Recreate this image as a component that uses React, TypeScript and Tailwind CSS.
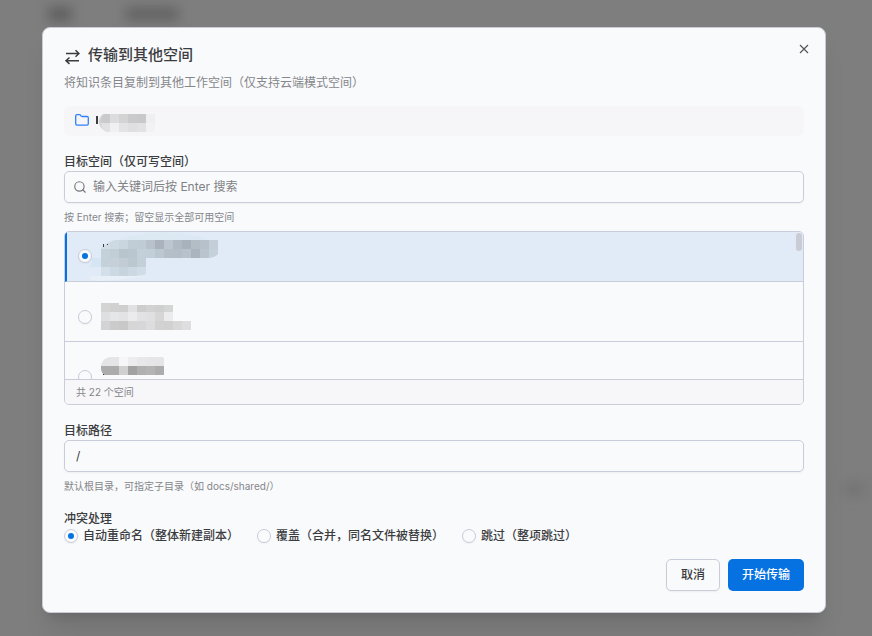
import { Search } from "lucide-react";

type MosaicData = {
  rows: (string | null)[][];
  /** outline of the visible area */
  clip?: string;
  /** soft smear painted behind the cells */
  smear?: { d: string; fill: string }[];
  /** dark remainder of the covered text */
  mark?: string;
};

const CELL = 9;

const sourceMask: MosaicData = {
  rows: [
    ["#cacaca", "#dcdcde", "#d3d3d4", "#cacacb", "#c8c8ca", "#efeff1"],
    ["#e1e1e3", "#f0f0f2", "#e3e3e5", "#dfdfe1", "#e2e2e4", "#f2f2f4"],
  ],
  clip: "M3 0H54V18H6Q0 16 0 9Q0 3 3 0Z",
  smear: [{ d: "M2 0Q-3 4-2 9Q-1 15 6 18V0Z", fill: "#d3d3d4" }],
  mark: "M-5 2h2v8h-2z",
};

const spaces: { id: string; row: string; radio: string; mask: MosaicData }[] = [
  {
    id: "space-1",
    row: "flex h-[50px] items-start gap-[9px] border-b border-l-2 border-b-[#c9ccd9] border-l-[#0671e0] bg-[#e0ebf7] pl-[11px] pt-2",
    radio: "mt-[9px]",
    mask: {
      rows: [
        ["#d2dde6", "#cddae4", "#c9d5df", "#c1cdd6", "#bfcbd5", "#b7c2cc", "#a9b2bd", "#bbc6d0", "#b0bac5", "#a8b2bc", "#b2bdc6", "#b6c1cb", "#c3ced8"],
        ["#c5d1da", "#c1ced6", "#b9c5cd", "#bac6cf", "#c4d0d9", "#c2ced8", "#bcc8d1", "#b4bfc8", "#b4bec8", "#b7c2cb", "#aab4be", "#b9c4ce", "#c4d0da"],
        ["#c4d1d9", "#c5d0d9", "#c1ccd4", "#bcc8d0", "#c4cfd8"],
        ["#d3e0ea", "#ccd9e3", "#c7d4dd", "#ccd9e2", "#d0dde6"],
      ],
      clip: "M14 0H117V14Q114 18 106 18H45V34Q40 36 30 36H0V8Q6 2 14 0Z",
      smear: [
        { d: "M14 0Q58-14 101-3L104 0Z", fill: "#dce9f3" },
        { d: "M-13 27H0V18H-9V21Q-9 26-13 27Z", fill: "#d5e5f3" },
        { d: "M-10 36H44Q20 40 0 41Q-10 41-12 38Z", fill: "#e8eff7" },
      ],
      mark: "M2 4h1v3h-1zM6 4h1v1h-1z",
    },
  },
  {
    id: "space-2",
    row: "flex h-[60px] items-start gap-[9px] border-b border-[#c9ccd9] pl-[13px] pt-[21px]",
    radio: "mt-[7px]",
    mask: {
      rows: [
        ["#d4d4d5", "#d1d1d2", "#cfcfd0", "#e1e1e3", "#cdcdce", "#d2d2d3", "#cfcfd0", "#d5d5d6"],
        ["#dedfe0", "#e5e6e8", "#e3e3e5", "#ebebed", "#e2e2e4", "#e0e0e2", "#d6d6d7", "#ebecee"],
        ["#d3d3d4", "#cbcbcc", "#c8c8c9", "#d6d6d7", "#d7d7d9", "#dddddf", "#d2d2d3", "#d1d1d2", "#d8d8d9", "#dedee0"],
      ],
      clip: "M0 0H18V2H90V27H0Z",
    },
  },
  {
    id: "space-3",
    row: "flex h-[60px] items-start gap-[9px] pl-[13px] pt-[15px]",
    radio: "mt-[13px]",
    mask: {
      rows: [
        ["#e4e4e5", "#e5e5e7", "#f6f6f8", "#ededef", "#e8e8ea", "#e6e6e8", "#e5e5e7"],
        ["#acacad", "#acacad", "#d0d0d1", "#a2a2a3", "#b0b0b1", "#b4b4b5", "#acacad"],
      ],
      clip: "M9 0H61Q63 0 63 2V18H3Q0 15 0 12V8Q2 1 9 0Z",
      mark: "M2 17h1v1h-1z",
    },
  },
];

const strategies = [
  { value: "rename", label: "自动重命名（整体新建副本）" },
  { value: "overwrite", label: "覆盖（合并，同名文件被替换）" },
  { value: "skip", label: "跳过（整项跳过）" },
];

const radioClass =
  "grid size-[14px] shrink-0 appearance-none place-content-center rounded-full border border-[#c9ccd9] bg-[#f9fafc] shadow-xs before:size-[6px] before:rounded-full checked:before:bg-[#0671e0]";

const Mosaic = ({ id, data }: { id: string; data: MosaicData }) => {
  const cols = Math.max(...data.rows.map((row) => row.length));
  return (
    <svg aria-hidden="true" width={cols * CELL} height={data.rows.length * CELL} className="shrink-0 overflow-visible">
      {data.clip && (
        <clipPath id={`clip-${id}`}>
          <path d={data.clip} />
        </clipPath>
      )}
      {data.smear?.map((s) => <path key={s.d} d={s.d} fill={s.fill} />)}
      <g clipPath={data.clip ? `url(#clip-${id})` : undefined} shapeRendering="crispEdges">
        {data.rows.map((row, y) =>
          row.map((fill, x) =>
            fill ? <rect key={`${x}-${y}`} x={x * CELL} y={y * CELL} width={CELL} height={CELL} fill={fill} /> : null,
          ),
        )}
      </g>
      {data.mark && <path d={data.mark} fill="#3b3c40" />}
    </svg>
  );
};

const TransferIcon = () => (
  <svg width="16" height="16" viewBox="0 0 16 16" fill="none" stroke="currentColor" strokeWidth="1.5" aria-hidden="true">
    <path d="M2 4.500H15M11.500 1.300 15 4.500l-3.500 3.200M15 11.700H2M5.500 8.500 2 11.700l3.500 3.200" />
  </svg>
);

const FolderIcon = () => (
  <svg width="14" height="12" viewBox="0 0 14 12" fill="none" stroke="#2f80fa" strokeWidth="1.300" aria-hidden="true">
    <path d="M.7 2A1.3 1.3 0 0 1 2 .7h2.600c.5 0 .8.2 1 .6l.5.7c.2.3.5.5.9.5h5A1.300 1.300 0 0 1 13.300 3.800v6A1.300 1.300 0 0 1 12 11.100H2A1.300 1.300 0 0 1 .7 9.800z" />
  </svg>
);

const CloseIcon = () => (
  <svg width="10" height="10" viewBox="0 0 10 10" stroke="currentColor" strokeWidth="1.2" aria-hidden="true">
    <path d="m1 1 8 8M9 1 1 9" />
  </svg>
);

const Backdrop = () => (
  <div className="absolute inset-0 overflow-hidden" aria-hidden="true">
    <div className="absolute left-12 top-[7px] h-3.5 w-6 bg-[#5f5f5f] blur-[6px]" />
    <div className="absolute left-[126px] top-[7px] h-3.5 w-[52px] bg-[#636363] blur-[6px]" />
    <div className="absolute right-2 top-[482px] h-3.5 w-5 bg-[#747474] blur-[6px]" />
  </div>
);

export default function App() {
  return (
    <div className="relative min-h-screen bg-[#7e7e7e] pb-[23px] pl-[42px] pr-[46px] pt-[27px] font-['Inter','Noto_Sans_CJK_SC',sans-serif] text-xs text-[#3b3c40]">
      <Backdrop />

      <div
        role="dialog"
        aria-labelledby="dialog-title"
        className="relative rounded-lg border border-[#c9ccd4] bg-[#f9fafc] px-[21px] pb-[21px] pt-[17px] shadow-xl"
      >
        <button type="button" aria-label="关闭" className="absolute right-[15px] top-[15px] p-px text-[#55565a]">
          <CloseIcon />
        </button>

        <h2 id="dialog-title" className="flex items-center gap-2 text-[15px] leading-5 font-medium">
          <span className="pt-1">
            <TransferIcon />
          </span>
          传输到其他空间
        </h2>
        <p className="mt-2.5 leading-4 text-[#85868a]">将知识条目复制到其他工作空间（仅支持云端模式空间）</p>

        <div className="mt-[15px] flex h-[30px] items-center gap-3 rounded-md bg-[#f6f6f8] px-[11px]">
          <div className="pb-0.5">
            <FolderIcon />
          </div>
          <div className="pt-1">
            <Mosaic id="source" data={sourceMask} />
          </div>
        </div>

        <label htmlFor="space-search" className="mt-[17px] block leading-[18px] font-medium">
          目标空间（仅可写空间）
        </label>
        <div className="flex h-8 items-center gap-1.5 rounded-[5px] border border-[#c9ccd9] px-2 shadow-xs">
          <Search size={14} strokeWidth={2} className="shrink-0 text-[#77787c]" />
          <input
            id="space-search"
            type="text"
            placeholder="输入关键词后按 Enter 搜索"
            className="min-w-0 flex-1 bg-transparent outline-none placeholder:text-[#808185]"
          />
        </div>
        <p className="mt-1.5 text-[10px] leading-4 text-[#85868a]">按 Enter 搜索；留空显示全部可用空间</p>

        <div className="mt-1.5 overflow-hidden rounded-[5px] border border-[#c9ccd9]">
          <div className="relative h-[147px] overflow-hidden">
            {spaces.map((space, i) => (
              <label key={space.id} className={space.row}>
                <input
                  type="radio"
                  name="space"
                  aria-label={space.id}
                  defaultChecked={i === 0}
                  className={`${radioClass} ${space.radio}`}
                />
                <Mosaic id={space.id} data={space.mask} />
              </label>
            ))}
            <div className="absolute right-px top-px h-[18px] w-1.5 rounded-full bg-[#c9ccd4]" />
          </div>
          <div className="border-t border-[#c9ccd9] bg-[#f7f7f9] px-[11px] text-[10px] leading-6 text-[#85868a]">共 22 个空间</div>
        </div>

        <label htmlFor="target-path" className="mt-[17px] block leading-[18px] font-medium">
          目标路径
        </label>
        <div className="flex h-8 items-center rounded-[5px] border border-[#c9ccd9] px-[11px] shadow-xs">
          <input id="target-path" type="text" defaultValue="/" className="min-w-0 flex-1 bg-transparent outline-none" />
        </div>
        <p className="mt-1.5 text-[10px] leading-4 text-[#85868a]">默认根目录，可指定子目录（如 docs/shared/）</p>

        <fieldset className="mt-4 font-medium">
          <legend className="leading-[18px]">冲突处理</legend>
          <div className="flex flex-wrap gap-x-[18px] leading-4">
            {strategies.map((item, i) => (
              <label key={item.value} className="flex items-center gap-[5px]">
                <input type="radio" name="strategy" value={item.value} defaultChecked={i === 0} className={radioClass} />
                {item.label}
              </label>
            ))}
          </div>
        </fieldset>

        <div className="mt-[15px] flex justify-end gap-2 font-medium">
          <button type="button" className="h-8 rounded-[5px] border border-[#c9ccd9] px-3.5 shadow-xs">
            取消
          </button>
          <button type="button" className="h-8 rounded-[5px] bg-[#0671e0] px-3.5 text-white">
            开始传输
          </button>
        </div>
      </div>
    </div>
  );
}
